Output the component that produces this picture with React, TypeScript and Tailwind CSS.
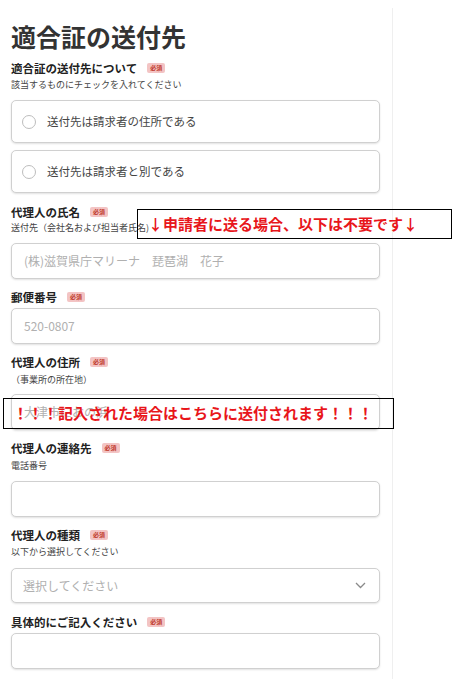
const font = { fontFamily: '"Noto Sans CJK JP", "Noto Sans", sans-serif' };

function Hissu() {
  return (
    <span className="ml-[10px] inline-flex h-[10px] items-center rounded-[2px] bg-[#f3c4c4] px-[3px] text-[6px] leading-none text-[#c0392b]">
      必須
    </span>
  );
}

function Label({ text, mt }: { text: string; mt: string }) {
  return (
    <div className={`${mt} flex h-[16px] items-center text-[11.5px] font-bold leading-[16px] text-[#222]`}>
      {text}
      <Hissu />
    </div>
  );
}

function Sub({ text, mt }: { text: string; mt: string }) {
  return <div className={`${mt} h-[12px] text-[9px] leading-[12px] text-[#444]`}>{text}</div>;
}

function Field({ placeholder, mt, h = 'h-[36px]' }: { placeholder?: string; mt: string; h?: string }) {
  return (
    <div
      className={`${mt} ${h} flex items-center rounded-[5px] border border-[#d0d0d0] bg-white px-[12px] text-[12px] text-[#b0b0b0] shadow-[0_1px_2px_rgba(0,0,0,0.12)]`}
    >
      {placeholder}
    </div>
  );
}

function Radio({ text, mt, h }: { text: string; mt: string; h: string }) {
  return (
    <div
      className={`${mt} ${h} flex items-center rounded-[5px] border border-[#d0d0d0] bg-white pl-[10px] shadow-[0_1px_2px_rgba(0,0,0,0.12)]`}
    >
      <span className="h-[14px] w-[14px] rounded-full border border-[#bdbdbd] bg-white" />
      <span className="ml-[11px] text-[11.5px] text-[#444]">{text}</span>
    </div>
  );
}

export default function App() {
  return (
    <div className="relative h-[679px] w-[471px] overflow-hidden bg-white" style={font}>
      <div className="h-full w-[393px] pl-[11px] pr-[13px] pt-[20px]">
        <h1 className="h-[32px] text-[25px] font-bold leading-[32px] text-[#333]">適合証の送付先</h1>
        <Label text="適合証の送付先について" mt="mt-[8px]" />
        <Sub text="該当するものにチェックを入れてください" mt="mt-[3px]" />
        <Radio text="送付先は請求者の住所である" mt="mt-[9px]" h="h-[43px]" />
        <Radio text="送付先は請求者と別である" mt="mt-[7px]" h="h-[43px]" />

        <Label text="代理人の氏名" mt="mt-[11px]" />
        <Sub text="送付先（会社名および担当者氏名)" mt="mt-[2px]" />
        <Field placeholder="(株)滋賀県庁マリーナ　琵琶湖　花子" mt="mt-[9px]" />

        <Label text="郵便番号" mt="mt-[10px]" />
        <Field placeholder="520-0807" mt="mt-[3px]" />

        <Label text="代理人の住所" mt="mt-[10px]" />
        <Sub text="（事業所の所在地）" mt="mt-[4px]" />
        <Field placeholder="大津市におの浜" mt="mt-[8px]" />

        <Label text="代理人の連絡先" mt="mt-[10px]" />
        <Sub text="電話番号" mt="mt-[4px]" />
        <Field mt="mt-[9px]" />

        <Label text="代理人の種類" mt="mt-[10px]" />
        <Sub text="以下から選択してください" mt="mt-[3px]" />
        <div className="mt-[10px] flex h-[35px] items-center justify-between rounded-[5px] border border-[#d0d0d0] bg-white pl-[11px] pr-[13px] text-[12px] text-[#b0b0b0] shadow-[0_1px_2px_rgba(0,0,0,0.12)]">
          選択してください
          <svg width="11" height="7" viewBox="0 0 11 7" fill="none">
            <path d="M1 1l4.5 4.5L10 1" stroke="#8a8a8a" strokeWidth="1.3" />
          </svg>
        </div>

        <Label text="具体的にご記入ください" mt="mt-[11px]" />
        <Field mt="mt-[3px]" />
      </div>

      <div className="absolute bottom-0 left-[392px] top-[8px] w-px bg-[#efefef]" />

      <div className="absolute left-[137px] top-[209px] flex h-[30px] w-[315px] items-center border border-black pl-[10px] text-[15px] font-bold text-[#e8161b]">
        ↓申請者に送る場合、以下は不要です↓
      </div>
      <div className="absolute left-[3px] top-[398px] flex h-[31px] w-[391px] items-center border border-black pl-[9px] text-[15px] font-bold text-[#e8161b]">
        ！！！記入された場合はこちらに送付されます！！！
      </div>
    </div>
  );
}
